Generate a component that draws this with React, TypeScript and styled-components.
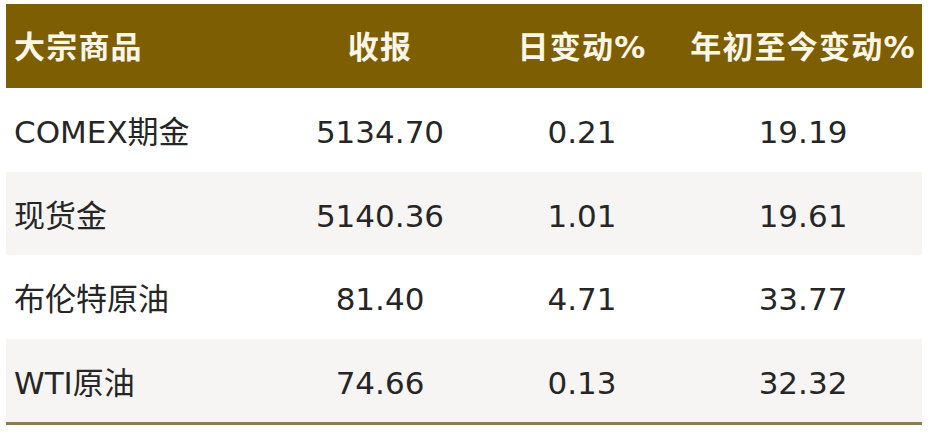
import React from "react";
import styled, { createGlobalStyle } from "styled-components";

const Global = createGlobalStyle`
  html, body { margin: 0; padding: 0; background: #ffffff; }
  body { font-family: "DejaVu Sans", "Noto Sans CJK SC", sans-serif; }
`;

const Table = styled.div`
  margin: 4px 8px 0 6px;
  width: 916px;
  display: flex;
  flex-direction: column;
  border-bottom: 3px solid #8c7c52;
`;

const Row = styled.div<{ $head?: boolean; $shade?: boolean }>`
  display: grid;
  grid-template-columns: 274px 200px 204px 1fr;
  align-items: center;
  height: ${(p) => (p.$head ? 84 : 83.5)}px;
  background: ${(p) => (p.$head ? "#7d5e02" : p.$shade ? "#f6f5f3" : "#ffffff")};
  color: ${(p) => (p.$head ? "#fbf6e8" : "#262626")};
  font-weight: ${(p) => (p.$head ? 700 : 400)};
`;

const Cell = styled.div<{ $first?: boolean }>`
  font-size: 31px;
  line-height: 1;
  padding-top: 6px;
  padding-left: ${(p) => (p.$first ? 8 : 0)}px;
  text-align: ${(p) => (p.$first ? "left" : "center")};
  white-space: nowrap;
`;

const HeadCell = styled(Cell)`
  padding-top: 2px;
  letter-spacing: 1.2px;
`;

const head = ["大宗商品", "收报", "日变动%", "年初至今变动%"];
const rows = [
  ["COMEX期金", "5134.70", "0.21", "19.19"],
  ["现货金", "5140.36", "1.01", "19.61"],
  ["布伦特原油", "81.40", "4.71", "33.77"],
  ["WTI原油", "74.66", "0.13", "32.32"],
];

export default function App() {
  return (
    <>
      <Global />
      <Table>
        <Row $head>
          {head.map((h, i) => (
            <HeadCell key={h} $first={i === 0}>
              {h}
            </HeadCell>
          ))}
        </Row>
        {rows.map((r, ri) => (
          <Row key={r[0]} $shade={ri % 2 === 1}>
            {r.map((c, i) => (
              <Cell key={i} $first={i === 0}>
                {c}
              </Cell>
            ))}
          </Row>
        ))}
      </Table>
    </>
  );
}
